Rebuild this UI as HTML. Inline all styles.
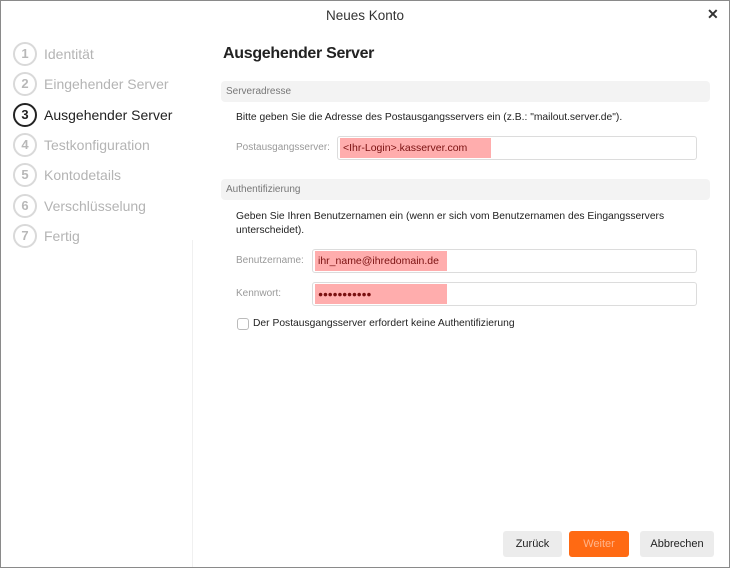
<!DOCTYPE html>
<html><head><meta charset="utf-8"><style>
*{box-sizing:border-box;margin:0;padding:0}
body{width:730px;height:568px;background:#fff;font-family:"Liberation Sans",sans-serif;position:relative;overflow:hidden}
.frame{position:absolute;left:0;top:0;width:730px;height:568px;border:1px solid #8a8a8a;pointer-events:none}
.a{position:absolute;white-space:nowrap}
.c{position:absolute;left:13px;width:24px;height:24px;border:2px solid #d9d9d9;border-radius:50%;font-size:13px;color:#b8b8b8;text-align:center;line-height:20px;font-weight:bold}
.s{position:absolute;left:44px;font-size:14px;color:#b4b4b4}
.bar{position:absolute;left:221px;width:489px;height:21px;background:#f3f3f3;border-radius:4px;font-size:10px;color:#777;padding-left:5px;line-height:21px}
.t{font-size:10.3px;color:#222}
.l{font-size:10px;color:#999;line-height:14px}
.in{position:absolute;height:24px;border:1px solid #dcdcdc;border-radius:3px;background:#fff}
.pk{position:absolute;left:2px;top:1px;bottom:1px;background:#ffadad;font-size:10.5px;color:#7a1010;line-height:20px;padding-left:3px}
.b{position:absolute;top:531px;height:26px;border-radius:3px;background:#ececec;font-size:11px;color:#222;text-align:center;line-height:26px}
</style></head><body>
<div class="a" style="left:0;width:730px;top:8px;text-align:center;font-size:13.5px;color:#333">Neues Konto</div>
<div class="a" style="left:707px;top:6px;font-size:14px;color:#333;font-weight:bold">✕</div>
<div style="position:absolute;left:192px;top:240px;width:1px;height:328px;background:#f0f0f0"></div>

<div class="c" style="top:42px">1</div><div class="s" style="top:46px">Identität</div>
<div class="c" style="top:72px">2</div><div class="s" style="top:76px">Eingehender Server</div>
<div class="c" style="top:103px;border-color:#222;color:#222">3</div><div class="s" style="top:107px;color:#222">Ausgehender Server</div>
<div class="c" style="top:133px">4</div><div class="s" style="top:137px">Testkonfiguration</div>
<div class="c" style="top:163px">5</div><div class="s" style="top:167px">Kontodetails</div>
<div class="c" style="top:194px">6</div><div class="s" style="top:198px">Verschlüsselung</div>
<div class="c" style="top:224px">7</div><div class="s" style="top:228px">Fertig</div>

<div class="a" style="left:223px;top:45px;font-size:16px;color:#222;font-weight:bold;letter-spacing:-0.3px">Ausgehender Server</div>
<div class="bar" style="top:81px">Serveradresse</div>
<div class="a t" style="left:236px;top:112px">Bitte geben Sie die Adresse des Postausgangsservers ein (z.B.: "mailout.server.de").</div>
<div class="a l" style="left:236px;top:141px">Postausgangsserver:</div>
<div class="in" style="left:337px;top:136px;width:360px"><div class="pk" style="width:151px">&lt;Ihr-Login&gt;.kasserver.com</div></div>

<div class="bar" style="top:179px">Authentifizierung</div>
<div class="a t" style="left:236px;top:210px;line-height:14px">Geben Sie Ihren Benutzernamen ein (wenn er sich vom Benutzernamen des Eingangsservers<br>unterscheidet).</div>
<div class="a l" style="left:236px;top:254px">Benutzername:</div>
<div class="in" style="left:312px;top:249px;width:385px"><div class="pk" style="width:132px">ihr_name@ihredomain.de</div></div>
<div class="a l" style="left:236px;top:287px">Kennwort:</div>
<div class="in" style="left:312px;top:282px;width:385px"><div class="pk" style="width:132px;font-size:8.5px;letter-spacing:-0.3px">●●●●●●●●●●●</div></div>
<div style="position:absolute;left:237px;top:318px;width:12px;height:12px;border:1px solid #bbb;border-radius:3px"></div>
<div class="a t" style="left:253px;top:318px">Der Postausgangsserver erfordert keine Authentifizierung</div>

<div class="b" style="left:503px;width:59px">Zurück</div>
<div class="b" style="left:569px;width:60px;background:#ff6a13;color:#ffb48a">Weiter</div>
<div class="b" style="left:640px;width:74px">Abbrechen</div>
<div class="frame"></div>
</body></html>
